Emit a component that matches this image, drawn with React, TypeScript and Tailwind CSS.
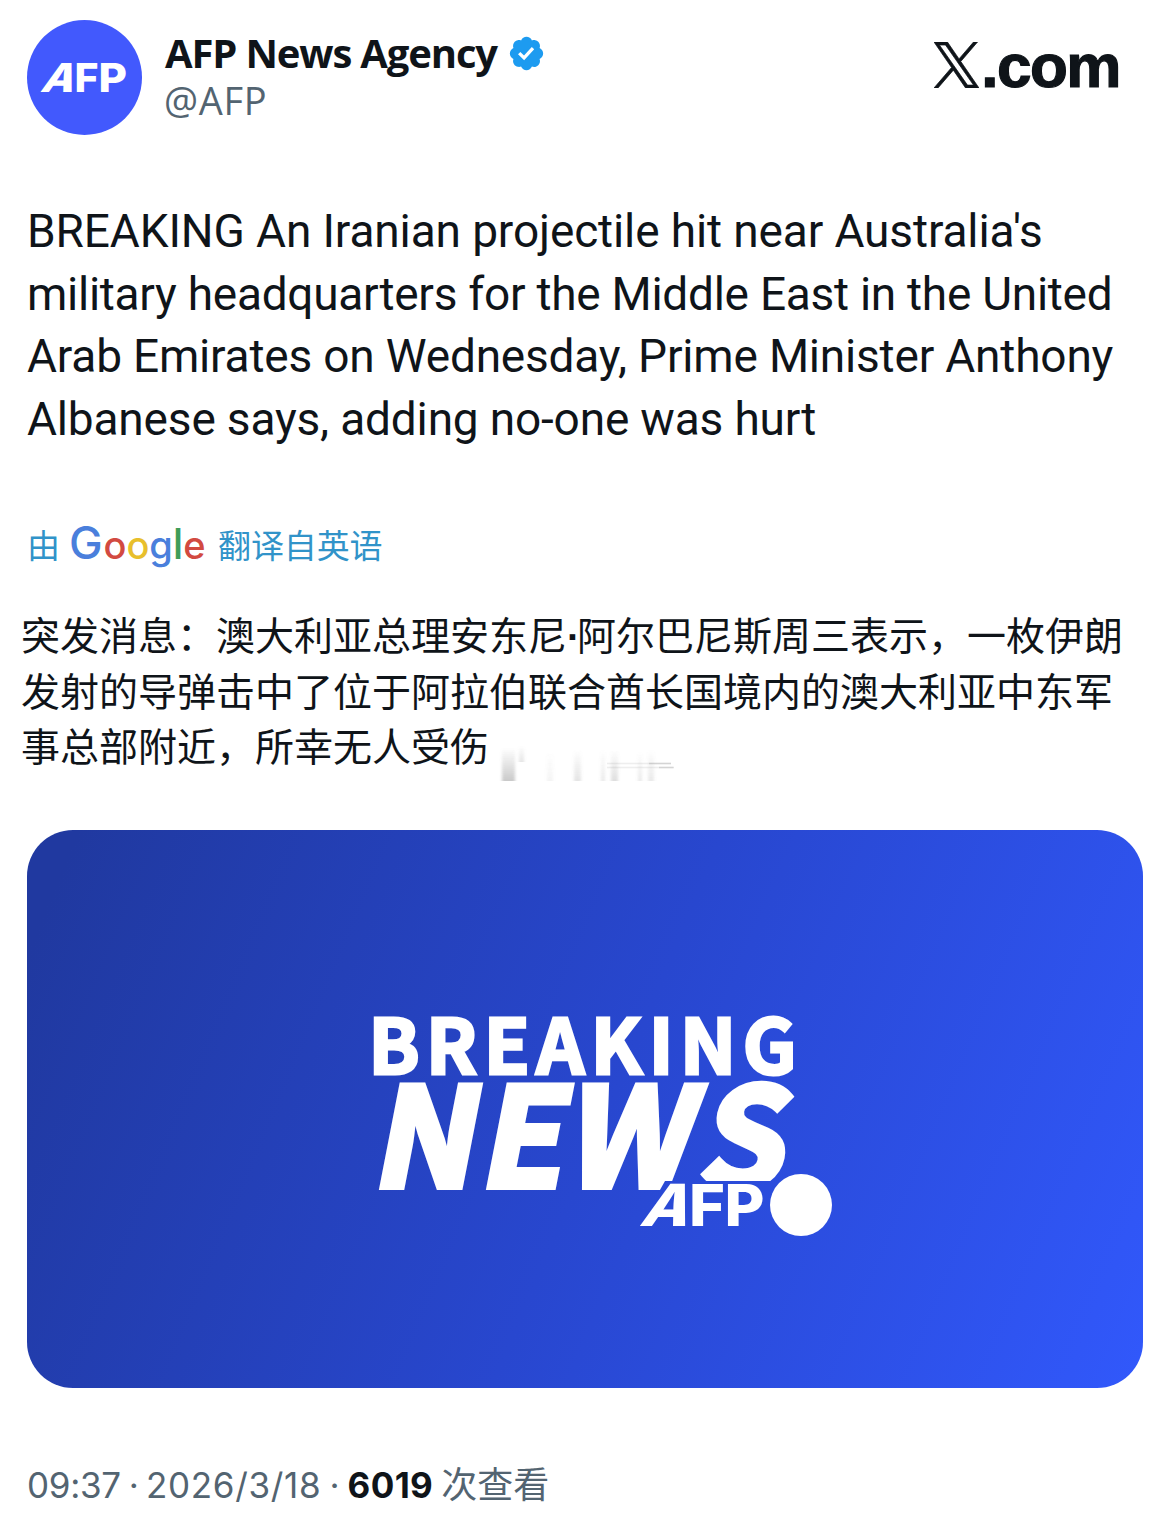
const X_PATH =
  'M714.163 519.284L1160.89 0H1055.03L667.137 450.887L357.328 0H0L468.492 681.821L0 1226.37H105.866L515.491 750.218L842.672 1226.37H1200L714.137 519.284H714.163ZM569.165 687.828L521.697 619.934L144.011 79.6944H306.615L611.412 515.685L658.88 583.579L1055.08 1150.3H892.476L569.165 687.854V687.828Z';

const VERIFIED_PATH =
  'M20.396 11c-.018-.646-.215-1.275-.57-1.816-.354-.54-.852-.972-1.438-1.246.223-.607.27-1.264.14-1.897-.131-.634-.437-1.218-.882-1.687-.47-.445-1.053-.75-1.687-.882-.633-.13-1.29-.083-1.897.14-.273-.587-.704-1.086-1.245-1.44S11.647 1.62 11 1.604c-.646.017-1.273.213-1.813.568s-.969.854-1.24 1.44c-.608-.223-1.267-.272-1.902-.14-.635.13-1.22.436-1.69.882-.445.47-.749 1.055-.878 1.688-.13.633-.08 1.29.144 1.896-.587.274-1.087.705-1.443 1.245-.356.54-.555 1.17-.574 1.817.02.647.218 1.276.574 1.817.356.54.856.972 1.443 1.245-.224.606-.274 1.263-.144 1.896.13.634.433 1.218.877 1.688.47.443 1.054.747 1.687.878.633.132 1.29.084 1.897-.136.274.586.705 1.084 1.246 1.439.54.354 1.17.551 1.816.569.647-.016 1.276-.213 1.817-.567s.972-.854 1.245-1.44c.604.239 1.266.296 1.903.164.636-.132 1.22-.447 1.68-.907.46-.46.776-1.044.908-1.681s.075-1.299-.165-1.903c.586-.274 1.084-.705 1.439-1.246.354-.54.551-1.17.569-1.816zM9.662 14.85l-3.429-3.428 1.293-1.302 2.072 2.072 4.4-4.794 1.347 1.246z';

const tweetLines = [
  { text: "BREAKING An Iranian projectile hit near Australia's", tracking: 'tracking-[-0.12px]' },
  { text: 'military headquarters for the Middle East in the United', tracking: 'tracking-[-0.27px]' },
  { text: 'Arab Emirates on Wednesday, Prime Minister Anthony', tracking: 'tracking-[-0.19px]' },
  { text: 'Albanese says, adding no-one was hurt', tracking: 'tracking-[-0.17px]' },
];

const googleLetters = [
  { char: 'G', style: 'text-[45px] text-[#4a7fdc] mr-[1px]' },
  { char: 'o', style: 'text-[#d24a41]' },
  { char: 'o', style: 'text-[#e8bf2c]' },
  { char: 'g', style: 'text-[#4a7fdc]' },
  { char: 'l', style: 'text-[42px] text-[#3f9d58]' },
  { char: 'e', style: 'text-[#d24a41]' },
];

function Avatar() {
  return (
    <svg viewBox="0 0 115 115" className="h-[115px] w-[115px] shrink-0">
      <circle cx="57.5" cy="57.5" r="57.5" fill="#4259fd" />
      <g fill="#fff" className="font-['Inter'] text-[40px] font-extrabold">
        <text transform="translate(12.5 72) skewX(-20)" textLength="33" lengthAdjust="spacingAndGlyphs">A</text>
        <text x="47.5" y="72" textLength="24" lengthAdjust="spacingAndGlyphs">F</text>
        <text x="71.5" y="72" textLength="28.5" lengthAdjust="spacingAndGlyphs">P</text>
      </g>
    </svg>
  );
}

function Header() {
  return (
    <header className="flex h-[115px] items-start">
      <Avatar />
      <div className="ml-[23px] font-['Open_Sans',sans-serif]">
        <div className="mt-[7px] flex h-[52px] items-center">
          <span className="whitespace-nowrap text-[40px] font-bold leading-[52px] tracking-[-1.15px]">AFP News Agency</span>
          <svg viewBox="0 0 22 22" className="ml-[10px] h-[39px] w-[39px]" fill="#1d9bf0">
            <path d={VERIFIED_PATH} />
          </svg>
        </div>
        <div className="mt-[-5px] ml-[-1px] text-[38px] leading-[52px] tracking-[0.7px] text-[#536471]">@AFP</div>
      </div>
      <div className="mr-[23px] ml-auto mt-[22px] flex items-start">
        <svg viewBox="0 0 1200 1227" className="h-[46px] w-[45px]" fill="#0f1419" stroke="#0f1419" strokeWidth="20">
          <path d={X_PATH} />
        </svg>
        <span className="mt-[-8px] ml-[2px] font-['Liberation_Sans',sans-serif] text-[62px] font-bold leading-[64px] tracking-[-1.5px] [-webkit-text-stroke:1.2px_#0f1419]">.com</span>
      </div>
    </header>
  );
}

function TranslatedBy() {
  return (
    <div className="flex h-[50px] items-center font-['Noto_Sans_CJK_SC',sans-serif] text-[33px] leading-[50px] text-[#3193c9]">
      <span>由</span>
      <span className="ml-[9px] w-[136px] whitespace-nowrap font-['Inter',sans-serif] text-[38px] font-medium tracking-[-0.1px]">
        {googleLetters.map((l, i) => (
          <span key={i} className={l.style}>{l.char}</span>
        ))}
      </span>
      <span className="ml-[13px] tracking-[-0.1px]">翻译自英语</span>
    </div>
  );
}

// faint leftover strokes after the last translated line
function Smudge() {
  return (
    <svg viewBox="0 0 180 40" className="mt-[27px] ml-[8px] h-[40px] w-[180px]">
      <defs>
        <linearGradient id="fade" x1="0" y1="0" x2="0" y2="1">
          <stop offset="0" stopColor="#888" stopOpacity="0" />
          <stop offset="1" stopColor="#888" stopOpacity="0.45" />
        </linearGradient>
        <filter id="soft">
          <feGaussianBlur stdDeviation="1.8 0" />
        </filter>
      </defs>
      <g fill="url(#fade)" filter="url(#soft)">
        <rect x="5" y="4" width="13" height="33" />
        <rect x="22" y="2" width="5" height="16" opacity="0.5" />
        <rect x="50" y="8" width="6" height="29" opacity="0.2" />
        <rect x="77" y="6" width="7" height="31" opacity="0.5" />
        <rect x="104" y="6" width="4" height="31" opacity="0.4" />
        <rect x="114" y="6" width="7" height="31" opacity="0.6" />
        <rect x="141" y="8" width="4" height="29" opacity="0.4" />
        <rect x="151" y="6" width="6" height="31" opacity="0.4" />
      </g>
      <path d="M110 19.5h64M110 23.5h66" stroke="#888" strokeOpacity="0.14" strokeWidth="1.5" />
      <path d="M152 19.5h22M162 23.5h15" stroke="#888" strokeOpacity="0.25" strokeWidth="1.5" />
    </svg>
  );
}

function BreakingCard() {
  return (
    <svg viewBox="0 0 1116 558" className="block h-[558px] w-[1116px] rounded-[46px]">
      <defs>
        <linearGradient id="card" gradientUnits="userSpaceOnUse" x1="10" y1="100" x2="1110" y2="560">
          <stop offset="0" stopColor="#2039a0" />
          <stop offset="0.5" stopColor="#2847cf" />
          <stop offset="1" stopColor="#3158fb" />
        </linearGradient>
      </defs>
      <rect width="1116" height="558" fill="url(#card)" />
      <g fill="#fff" stroke="#fff" className="font-['Noto_Sans_CJK_SC',sans-serif] font-bold">
        <text x="341.5" y="244" fontSize="75" strokeWidth="3" textLength="428" lengthAdjust="spacing">BREAKING</text>
        <text transform="translate(343 357) skewX(-11)" x="0 107 193 326" fontSize="137" strokeWidth="6">NEWS</text>
      </g>
      <path d="M638 351h120v50h-148z" fill="url(#card)" />
      <g fill="#fff" className="font-['Inter',sans-serif] text-[58px] font-extrabold">
        <text transform="translate(611.5 396) skewX(-20)" textLength="48" lengthAdjust="spacingAndGlyphs">A</text>
        <text x="662" y="396" textLength="36" lengthAdjust="spacingAndGlyphs">F</text>
        <text x="697.5" y="396" textLength="40" lengthAdjust="spacingAndGlyphs">P</text>
      </g>
      <circle cx="774" cy="375" r="34" fill="url(#card)" />
      <circle cx="774" cy="375" r="31" fill="#fff" />
    </svg>
  );
}

export default function App() {
  return (
    <main className="h-[1528px] w-[1169px] overflow-hidden bg-white pt-5 pr-[26px] pl-[27px] text-[#0f1419]">
      <Header />

      <div className="mt-[65px] font-['Roboto',sans-serif] text-[46px] leading-[62.5px]">
        {tweetLines.map((line) => (
          <p key={line.text} className={`whitespace-nowrap ${line.tracking}`}>{line.text}</p>
        ))}
      </div>

      <div className="mt-[69px]">
        <TranslatedBy />
      </div>

      <div className="mt-[37px] ml-[-6px] font-['Noto_Sans_CJK_SC',sans-serif] text-[39px] leading-[55.5px] whitespace-nowrap">
        <p className="h-[55.5px]">
          突发消息：澳大利亚总理安东尼<span className="font-['Liberation_Sans'] leading-none font-bold tracking-[-3px]">·</span>阿尔巴尼斯周三表示，一枚伊朗
        </p>
        <p className="h-[55.5px]">发射的导弹击中了位于阿拉伯联合酋长国境内的澳大利亚中东军</p>
        <div className="flex h-[55.5px]">
          <p>事总部附近，所幸无人受伤</p>
          <Smudge />
        </div>
      </div>

      <div className="mt-[57.5px]">
        <BreakingCard />
      </div>

      <footer className="mt-[71px] flex h-[52px] items-center whitespace-pre font-['Inter','Noto_Sans_CJK_SC',sans-serif] text-[35px] text-[#536471]">
        <span className="tracking-[-0.3px]">09:37</span>
        <span className="ml-[8px]">·</span>
        <span className="ml-[7px] tracking-[0.7px]">2026/3/18</span>
        <span className="ml-[8px]">·</span>
        <span className="ml-[8px] font-bold tracking-[0.4px] text-[#0f1419]">6019</span>
        <span className="ml-[8px] text-[36px]">次查看</span>
      </footer>
    </main>
  );
}
